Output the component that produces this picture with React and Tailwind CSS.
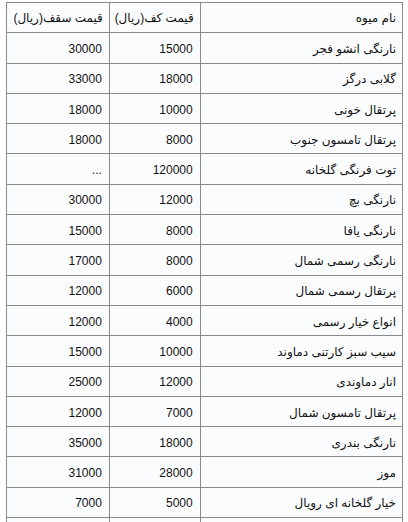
import React from "react";

const rows = [
  ["نارنگی انشو فجر", "15000", "30000"],
  ["گلابی درگز", "18000", "33000"],
  ["پرتقال خونی", "10000", "18000"],
  ["پرتقال تامسون جنوب", "8000", "18000"],
  ["توت فرنگی گلخانه", "120000", "..."],
  ["نارنگی بچ", "12000", "30000"],
  ["نارنگی یافا", "8000", "15000"],
  ["نارنگی رسمی شمال", "8000", "17000"],
  ["پرتقال رسمی شمال", "6000", "12000"],
  ["انواع خیار رسمی", "4000", "12000"],
  ["سیب سبز کارتنی دماوند", "10000", "15000"],
  ["انار دماوندی", "12000", "25000"],
  ["پرتقال تامسون شمال", "7000", "12000"],
  ["نارنگی بندری", "18000", "35000"],
  ["موز", "28000", "31000"],
  ["خیار گلخانه ای رویال", "5000", "7000"],
  ["", "", ""],
];

export default function App() {
  return (
    <div
      className="bg-white w-[408px] h-[522px] overflow-hidden pt-[2px] pl-[6px]"
      style={{ fontFamily: '"Liberation Sans", "DejaVu Sans", sans-serif' }}
    >
      <table
        dir="rtl"
        className="border-collapse w-[397px] text-[12px] text-[#111] bg-[#fbfcfe]"
      >
        <colgroup>
          <col className="w-[203px]" />
          <col className="w-[91px]" />
          <col className="w-[103px]" />
        </colgroup>
        <tbody>
          <tr className="h-[30.3px]">
            <td className="border border-[#8a8a8a] text-right pr-[6px] pt-[1px]">نام میوه</td>
            <td className="border border-[#8a8a8a] text-right pr-[6px] pt-[1px]">قیمت کف(ریال)</td>
            <td className="border border-[#8a8a8a] text-right pr-[6px] pt-[1px]">قیمت سقف(ریال)</td>
          </tr>
          {rows.map((r, i) => (
            <tr key={i} className="h-[30.3px]">
              <td className="border border-[#8a8a8a] text-right pr-[6px] pt-[2px]">{r[0]}</td>
              <td className="border border-[#8a8a8a] text-right pr-[7px] pt-[2px]">
                <span dir="ltr">{r[1]}</span>
              </td>
              <td className="border border-[#8a8a8a] text-right pr-[7px] pt-[2px]">
                <span dir="ltr">{r[2]}</span>
              </td>
            </tr>
          ))}
        </tbody>
      </table>
    </div>
  );
}
